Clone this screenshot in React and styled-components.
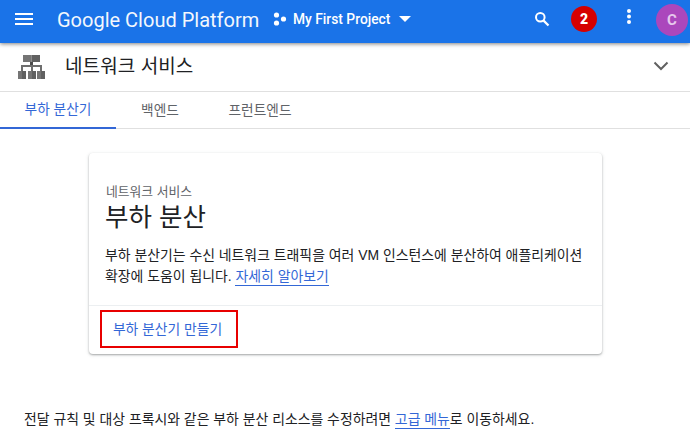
import React from 'react';
import styled, { createGlobalStyle } from 'styled-components';

const Global = createGlobalStyle`
  html, body { margin: 0; padding: 0; background: #fff; width: 690px; height: 443px; overflow: hidden; }
  body { font-family: "Liberation Sans", "Noto Sans CJK KR", sans-serif; color: #202124; }
  * { box-sizing: border-box; }
`;

const Page = styled.div`width: 690px; height: 443px; overflow: hidden; display: flex; flex-direction: column;`;
const TopBar = styled.header`
  height: 43px; flex: none; background: #1a73e8; display: flex; align-items: center;
  box-shadow: 0 1px 4px rgba(0,0,0,.5); position: relative; z-index: 2; color: #fff;
`;
const Menu = styled.svg`width: 20px; height: 14px; margin: 0 0 6px 14px; flex: none;`;
const Brand = styled.div`
  margin: 0 0 4px 23px; width: 193px; flex: none; font-family: "Roboto", sans-serif; font-size: 20px; color: #fff; opacity: .95; white-space: nowrap;
`;
const Project = styled.div`display: flex; align-items: center; margin: 0 0 5px 23px; width: 261px; flex: none;`;
const ProjectName = styled.span`font: 500 13.8px "Roboto", sans-serif; margin-left: 6px; white-space: nowrap;`;
const Caret = styled.svg`width: 12px; height: 6px; margin-left: 9px;`;
const Search = styled.svg`width: 16px; height: 16px; flex: none; margin-bottom: 6px;`;
const Badge = styled.div`
  width: 26px; height: 26px; border-radius: 50%; background: #d50000; flex: none; margin: 0 0 5px 21px;
  display: flex; align-items: center; justify-content: center; font: 900 14px "Roboto", sans-serif;
`;
const Dots = styled.svg`width: 6px; height: 15px; flex: none; margin: 0 0 11px 29px;`;
const Avatar = styled.div`
  width: 32px; height: 32px; border-radius: 50%; background: #ab47bc; flex: none; margin: 0 0 4px 24px;
  display: flex; align-items: center; justify-content: center; font: 700 15px "Roboto", sans-serif; color: #e6c8ec;
`;
const Section = styled.div`
  height: 49px; flex: none; display: flex; align-items: center; border-bottom: 1px solid #e0e0e0; padding: 0 21px 0 18px;
`;
const SectionIcon = styled.svg`width: 27px; height: 24px; flex: none; margin-bottom: 1px;`;
const SectionTitle = styled.div`font-size: 19px; color: #202124; margin-left: 20px; flex: 1; padding-bottom: 5px; letter-spacing: .1px;`;
const Chevron = styled.svg`width: 16px; height: 10px; flex: none; margin-bottom: 2px;`;
const Tabs = styled.nav`height: 37px; flex: none; display: flex; border-bottom: 1px solid #e0e0e0;`;
const Tab = styled.div`
  width: ${p => p.$w}px; height: 37px; flex: none; font-size: 13.7px; display: flex; align-items: center; justify-content: center; padding-bottom: 3px;
  color: ${p => p.$active ? '#3367d6' : '#5f6368'};
  border-bottom: ${p => p.$active ? '2px solid #3367d6' : 'none'};
`;
const Body = styled.main`flex: 1; padding: 24px 0 0 24px;`;
const Card = styled.section`
  width: 513px; height: 201px; margin-left: 65px; border-radius: 4px; background: #fff;
  box-shadow: 0 1px 2px rgba(60,64,67,.4), 0 1px 4px rgba(60,64,67,.12);
  display: flex; flex-direction: column;
`;
const CardBody = styled.div`flex: 1; padding: 31px 16px 0 16px; border-bottom: 1px solid #eceff1;`;
const Eyebrow = styled.div`font-size: 12.8px; line-height: 15px; color: #5f6368; margin-left: 1px;`;
const Heading = styled.h1`font-size: 25.5px; font-weight: 400; line-height: 32px; margin: 2px 0 12px; color: #202124;`;
const Desc = styled.p`font-size: 13.9px; line-height: 21px; margin: 0; white-space: nowrap; color: #202124;`;
const Link = styled.a`color: #3367d6; border-bottom: 1px solid #3367d6; text-decoration: none; padding-bottom: 1px;`;
const CardFoot = styled.div`height: 48px; flex: none; padding: 4px 0 0 11px;`;
const CreateBtn = styled.button`
  width: 138px; height: 38px; border: 2px solid #e80000; background: #fff; color: #3367d6; border-radius: 0;
  font: 13.8px "Liberation Sans", "Noto Sans CJK KR", sans-serif; padding: 0 3px 2px 0;
`;
const Footnote = styled.p`font-size: 13.9px; margin: 55px 0 0; line-height: 21px; white-space: nowrap;`;

export default function App() {
  return (
    <Page>
      <Global />
      <TopBar>
        <Menu viewBox="0 0 20 14"><path d="M1 2h18M1 7h18M1 12h18" stroke="#fff" strokeWidth="2" fill="none" /></Menu>
        <Brand>Google Cloud Platform</Brand>
        <Project>
          <svg width="14" height="14" viewBox="0 0 14 14"><circle cx="3.5" cy="3" r="2.6" fill="#fff" /><circle cx="3.5" cy="11" r="2.6" fill="#fff" /><circle cx="10.5" cy="7" r="2.6" fill="#fff" /></svg>
          <ProjectName>My First Project</ProjectName>
          <Caret viewBox="0 0 12 6"><path d="M0 0h12L6 6z" fill="#fff" /></Caret>
        </Project>
        <Search viewBox="0 0 16 16"><circle cx="6.3" cy="6.3" r="4.3" stroke="#fff" strokeWidth="2" fill="none" /><path d="M9.6 9.6L14.5 14.5" stroke="#fff" strokeWidth="2.2" /></Search>
        <Badge>2</Badge>
        <Dots viewBox="0 0 6 15"><circle cx="3" cy="2" r="2" fill="#fff" /><circle cx="3" cy="7.5" r="2" fill="#fff" /><circle cx="3" cy="13" r="2" fill="#fff" /></Dots>
        <Avatar>C</Avatar>
      </TopBar>
      <Section>
        <SectionIcon viewBox="0 0 27 24">
          <path d="M5 0h8.5v7H5zM10 16h4v8h-4zM0 16h4v8H0zM19 16h4v8h-4z" fill="#757575" />
          <path d="M13.5 0H22v7h-8.5zM14 16h4v8h-4zM4 16h4v8H4zM23 16h4v8h-4z" fill="#616161" />
          <path d="M12 7h3v3h-3z" fill="#4a4a4a" />
          <path d="M3 10h21v2H3zM3 10h2v6H3zM13 10h2v6h-2zM22 10h2v6h-2z" fill="#6e6e6e" />
        </SectionIcon>
        <SectionTitle>네트워크 서비스</SectionTitle>
        <Chevron viewBox="0 0 16 10"><path d="M1.5 1.5L8 8l6.5-6.5" stroke="#616161" strokeWidth="2" fill="none" /></Chevron>
      </Section>
      <Tabs>
        <Tab $w={116} $active>부하 분산기</Tab>
        <Tab $w={88}>백엔드</Tab>
        <Tab $w={112}>프런트엔드</Tab>
      </Tabs>
      <Body>
        <Card>
          <CardBody>
            <Eyebrow>네트워크 서비스</Eyebrow>
            <Heading>부하 분산</Heading>
            <Desc>부하 분산기는 수신 네트워크 트래픽을 여러 VM 인스턴스에 분산하여 애플리케이션<br />확장에 도움이 됩니다. <Link>자세히 알아보기</Link></Desc>
          </CardBody>
          <CardFoot><CreateBtn>부하 분산기 만들기</CreateBtn></CardFoot>
        </Card>
        <Footnote>전달 규칙 및 대상 프록시와 같은 부하 분산 리소스를 수정하려면 <Link>고급 메뉴</Link>로 이동하세요.</Footnote>
      </Body>
    </Page>
  );
}
